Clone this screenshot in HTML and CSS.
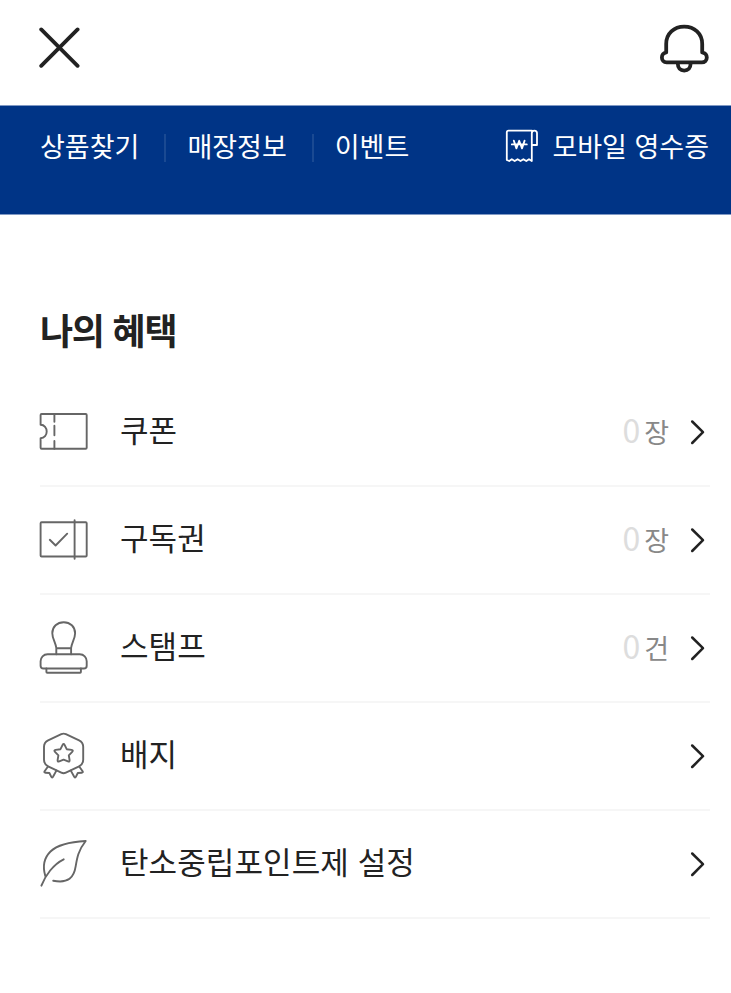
FILE: index.html
```
<!DOCTYPE html>
<html lang="ko">
<head>
    <meta charset="UTF-8">
    <meta name="viewport" content="width=device-width, initial-scale=1.0">
    <title>나의 혜택</title>
    <link rel="stylesheet" href="styles.css">
</head>
<body>
    <header class="top-bar">
        <button type="button" class="icon-btn" aria-label="닫기">
            <svg width="42" height="42" viewBox="0 0 42 42"><path d="M2.2 2.4 38.6 38.8M38.6 2.4 2.2 38.8"/></svg>
        </button>
        <button type="button" class="icon-btn" aria-label="알림">
            <svg width="50" height="50" viewBox="0 0 50 50">
                <path d="M6.2 28.5V19.9C6.2 9.6 14 2.6 24.2 2.6S42.2 9.6 42.2 19.9V28.5C44.9 29 46.8 30.8 46.8 33.6S44.7 38.4 41.8 38.4H6.6C3.7 38.4 1.9 36.4 1.9 33.6S3.5 29 6.2 28.5Z"/>
                <path d="M17.8 39.5C17.8 44 20.3 46.6 24.2 46.6S30.6 44 30.6 39.5"/>
            </svg>
        </button>
    </header>

    <nav class="menu">
        <ul class="menu-links">
            <li>상품찾기</li>
            <li>매장정보</li>
            <li>이벤트</li>
        </ul>
        <div class="receipt">
            <svg width="34" height="34" viewBox="0 0 34 34">
                <path d="M27 1.6H3.5Q1.8 1.6 1.8 3.3V31L4.2 32 6.8 30.2 9.7 32 12.6 30.2 15.5 32 18.4 30.2 21.3 32 24 30.2 26.8 32V4.2Q26.8 1.6 29.4 1.6T32 4.2V16H26.8"/>
                <path d="M8.8 11.6 11.4 19.4 14.2 11.8 17 19.4 19.6 11.6M6.8 15.4H21.8"/>
            </svg>
            <span>모바일 영수증</span>
        </div>
    </nav>

    <main class="benefits">
        <h1>나의 혜택</h1>
        <ul class="benefit-list">
            <li>
                <svg class="icon" viewBox="0 0 50 56">
                    <path d="M2.6 10H46.7Q47.7 10 47.7 11V43.7Q47.7 44.7 46.7 44.7H2.6Q1.6 44.7 1.6 43.7V34.3C5.4 34.3 7.7 31 7.7 27.5S5.4 20.7 1.6 20.7V11Q1.6 10 2.6 10Z"/>
                    <path d="M15.4 10V17.7M15.4 21.7V31.3M15.4 37V44.7"/>
                </svg>
                <span class="name">쿠폰</span>
                <span class="count">0</span><span class="unit">장</span>
                <svg class="arrow" viewBox="0 0 16 26"><path d="M2.2 2.5 13 13.2 2.2 24"/></svg>
            </li>
            <li>
                <svg class="icon" viewBox="0 0 50 56">
                    <rect x="1.6" y="10.3" width="46.1" height="34.2" rx="1"/>
                    <path d="M35.6 8.3V46.7M10.8 27.8 16.6 33.5 28.2 21.7"/>
                </svg>
                <span class="name">구독권</span>
                <span class="count">0</span><span class="unit">장</span>
                <svg class="arrow" viewBox="0 0 16 26"><path d="M2.2 2.5 13 13.2 2.2 24"/></svg>
            </li>
            <li>
                <svg class="icon" viewBox="0 0 50 56">
                    <path d="M17.3 34.3V28C16.6 22.5 13.3 18.5 13.3 13.2 13.3 6.8 18.2 2.2 24.7 2.2S36.1 6.8 36.1 13.2C36.1 18.5 32.8 22.5 32.1 28V34.3M17.3 28.3H32.1"/>
                    <path d="M8.6 34.3H40.7C44.8 34.3 47.7 37.4 47.7 41.3V45.7Q47.7 48.5 44.9 48.5H4.4Q1.6 48.5 1.6 45.7V41.3C1.6 37.4 4.5 34.3 8.6 34.3Z"/>
                    <path d="M7.4 48.5V51.9Q7.4 52.7 8.2 52.7H41.1Q41.9 52.7 41.9 51.9V48.5"/>
                </svg>
                <span class="name">스탬프</span>
                <span class="count">0</span><span class="unit">건</span>
                <svg class="arrow" viewBox="0 0 16 26"><path d="M2.2 2.5 13 13.2 2.2 24"/></svg>
            </li>
            <li>
                <svg class="icon" viewBox="0 0 50 56">
                    <path d="M22.3 6.2Q24.6 5.1 26.9 6.2L40.1 12.3C43.2 13.9 44.2 15.6 44.2 18.8V31.8C44.2 35 43.2 36.7 40.1 38.3L26.9 44.7Q24.6 45.8 22.3 44.7L9.1 38.3C6 36.7 5 35 5 31.8V18.8C5 15.6 6 13.9 9.1 12.3Z"/>
                    <path d="M23.6 16.9Q24.6 15 25.6 16.9L27.7 21.2 32.6 21.9Q34.7 22.3 33.2 23.8L29.8 27.3 30.6 32.1Q30.8 34.1 29 33.3L24.6 31.6 20.2 33.3Q18.4 34.1 18.6 32.1L19.4 27.3 16 23.8Q14.5 22.3 16.6 21.9L21.5 21.2Z"/>
                    <path d="M9 38.5 5.6 43.3Q4.8 44.7 6.4 44.7L10.4 45 12.2 48.7Q13 50.3 14 48.7L17.4 42.6M40.2 38.5 43.6 43.3Q44.4 44.7 42.8 44.7L38.8 45 37 48.7Q36.2 50.3 35.2 48.7L31.8 42.6"/>
                </svg>
                <span class="name">배지</span>
                <svg class="arrow" viewBox="0 0 16 26"><path d="M2.2 2.5 13 13.2 2.2 24"/></svg>
            </li>
            <li>
                <svg class="icon" viewBox="0 0 50 56">
                    <path d="M6.3 40C3.8 31.5 4.2 22.7 11.5 15.5 19.5 7.8 32 5.8 46.7 5 39.2 14.4 38 22.2 36.7 30.2 35 41.5 29.5 47.7 14.2 44.7"/>
                    <path d="M2.4 49.7C6.2 39.5 14.5 28.2 24.7 23.3"/>
                </svg>
                <span class="name">탄소중립포인트제 설정</span>
                <svg class="arrow" viewBox="0 0 16 26"><path d="M2.2 2.5 13 13.2 2.2 24"/></svg>
            </li>
        </ul>
    </main>
</body>
</html>
```
FILE: styles.css
```
* {
    box-sizing: border-box;
}

body {
    margin: 0;
    background: #fff;
    color: #222;
    font-family: "Noto Sans CJK KR", sans-serif;
}

ul {
    margin: 0;
    padding: 0;
    list-style: none;
}

svg {
    display: block;
    flex: none;
    fill: none;
    stroke: currentColor;
    stroke-linecap: round;
    stroke-linejoin: round;
}

.top-bar {
    display: flex;
    justify-content: space-between;
    align-items: flex-start;
    height: 105px;
    padding: 24px 21px 0 39px;
}

.icon-btn {
    padding: 0;
    border: none;
    background: none;
    color: #222;
    stroke-width: 3.8px;
}

.icon-btn:first-child {
    padding-top: 3px;
}

/* Blue menu */
.menu {
    display: flex;
    justify-content: space-between;
    align-items: flex-start;
    height: 110px;
    padding: 20px 22px 0 40px;
    border-top: 1px solid #8099c4;
    border-bottom: 1px solid #8099c4;
    background: #003486;
    color: #fff;
    font-size: 27px;
    line-height: 40px;
}

.menu-links {
    display: flex;
}

.menu-links li {
    display: flex;
    align-items: center;
}

.menu-links li + li::before {
    content: "";
    width: 2px;
    height: 28px;
    margin: 4px 21px 0 25px;
    background: #1a4992;
}

.receipt {
    display: flex;
    gap: 13px;
}

.receipt svg {
    margin-top: 3px;
    stroke-width: 1.8px;
}

/* Benefits */
.benefits {
    padding: 90px 21px 0 39px;
}

h1 {
    margin: 0 0 26px 1px;
    font-size: 36px;
    font-weight: 700;
    letter-spacing: -0.035em;
    line-height: 48px;
}

.benefit-list li {
    display: flex;
    align-items: center;
    height: 108px;
    margin-left: 1px;
    border-bottom: 2px solid #f6f6f6;
}

.icon {
    width: 50px;
    height: 56px;
    margin: 0 31px 0 -1px;
    color: #666;
    stroke-width: 1.9px;
}

.name {
    flex: 1;
    padding-bottom: 6px;
    font-size: 31px;
    letter-spacing: 0.1px;
    line-height: 46px;
}

.count {
    margin-right: 4px;
    padding-bottom: 6px;
    color: #ddd;
    font-size: 32px;
    line-height: 46px;
}

.unit {
    color: #888;
    font-size: 27px;
    line-height: 46px;
}

.arrow {
    width: 16px;
    height: 26px;
    margin: 0 4px 0 21px;
    stroke-width: 2.5px;
}
```
